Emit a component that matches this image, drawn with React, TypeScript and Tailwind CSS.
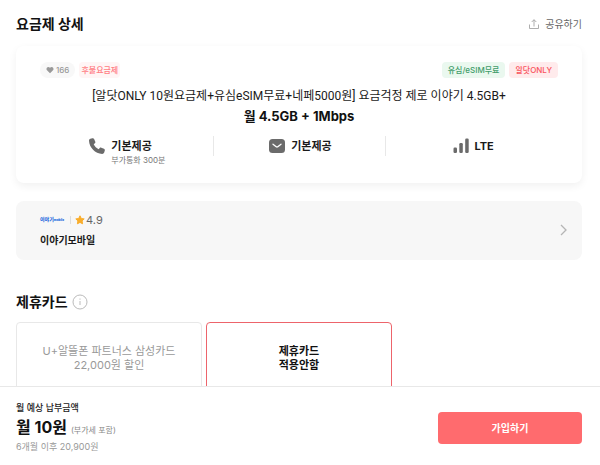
import type { ReactNode } from "react"

const benefits = [
  { icon: <PhoneIcon />, title: "기본제공", note: "부가통화 300분" },
  { icon: <MailIcon />, title: "기본제공" },
  { icon: <SignalIcon />, title: "LTE" },
]

const cards = [
  { id: "samsung", lines: ["U+알뜰폰 파트너스 삼성카드", "22,000원 할인"] },
  { id: "none", lines: ["제휴카드", "적용안함"] },
]

function PhoneIcon() {
  return (
    <svg className="size-4" viewBox="0 0 16 16" fill="#6b6b6b" aria-hidden="true">
      <path d="M3.300.3 1.400.8C.5 1.100 0 1.900 0 2.800.3 9.700 6.200 15.600 13.200 15.900c.9 0 1.700-.5 2-1.400l.6-2c.2-.7-.2-1.400-.8-1.700l-2.700-1.100c-.6-.2-1.200-.1-1.600.4l-1 1.200C7.500 10.300 5.700 8.500 4.700 6.300l1.200-1c.5-.4.6-1 .4-1.600L5.100 1.100C4.800.4 4-.1 3.300.3Z" />
    </svg>
  )
}

function MailIcon() {
  return (
    <svg className="size-4" viewBox="0 0 16 16" fill="none" aria-hidden="true">
      <rect y="1" width="16" height="14" rx="3.500" fill="#6b6b6b" />
      <path d="m4 6.200 3.200 2.500a1.300 1.300 0 0 0 1.600 0L12 6.200" stroke="white" strokeWidth="1.300" strokeLinecap="round" />
    </svg>
  )
}

function SignalIcon() {
  return (
    <svg className="size-4" viewBox="0 0 16 16" fill="#6b6b6b" aria-hidden="true">
      <rect x="0.500" y="9.500" width="3.500" height="5.500" rx="1.200" />
      <rect x="6.300" y="5" width="3.500" height="10" rx="1.200" />
      <rect x="12.200" y="0.500" width="3.500" height="14.500" rx="1.200" />
    </svg>
  )
}

function Tag({ className, children }: { className: string; children: ReactNode }) {
  return (
    <span className={`flex h-4 items-center rounded text-[8px] leading-4 font-medium ${className}`}>
      {children}
    </span>
  )
}

function PlanCard() {
  return (
    <section className="rounded-lg bg-white px-6 pt-4 pb-[15px] shadow-[0_3px_8px_rgba(0,0,0,0.06)]">
      <div className="flex items-center justify-between">
        <div className="flex gap-1">
          <span className="flex h-4 items-center gap-0.5 rounded-full bg-[#f8f8f8] px-1.5 text-[8px] leading-4 font-medium text-[#999999]">
            <svg className="size-2" viewBox="0 0 8 8" fill="#999999" aria-hidden="true">
              <path d="M4 7.200 1 4.300C-.6 2.600 1.800-.4 4 1.800 6.200-.4 8.600 2.600 7 4.300Z" />
            </svg>
            166
          </span>
          <Tag className="bg-[#fff5f5] px-0.5 text-[#ff7d84]">후불요금제</Tag>
        </div>
        <div className="flex gap-1">
          <Tag className="bg-[#eaf8ef] px-1.5 text-[#3f9c6a]">유심/eSIM무료</Tag>
          <Tag className="bg-[#ffebec] px-1.5 text-[#f9545d]">알닷ONLY</Tag>
        </div>
      </div>
      <h2 className="mt-2 text-center font-['Roboto','Noto_Sans_CJK_KR',sans-serif] text-[12px] leading-5 text-[#1a1a1a]">
        [알닷ONLY 10원요금제+유심eSIM무료+네페5000원] 요금걱정 제로 이야기 4.5GB+
      </h2>
      <p className="text-center text-[13px] leading-5 font-bold text-[#111111]">월 4.5GB + 1Mbps</p>
      <ul className="mt-2.5 grid grid-cols-3">
        {benefits.map((benefit, index) => (
          <li key={index} className="flex h-8">
            {index > 0 && <span className="h-5 w-px bg-[#e8e8e8]" />}
            <div className="flex flex-1 justify-center gap-1.5 pl-0.5">
              <span className="pt-0.5">{benefit.icon}</span>
              <div>
                <p className="text-[11px] leading-5 font-bold text-[#1a1a1a]">{benefit.title}</p>
                {benefit.note && <p className="text-[8px] leading-2 text-[#777777]">{benefit.note}</p>}
              </div>
            </div>
          </li>
        ))}
      </ul>
    </section>
  )
}

function CarrierLink() {
  return (
    <a href="#carrier" className="mt-[18px] flex items-center justify-between rounded-lg bg-[#f7f7f7] pt-2 pr-3 pb-2.5 pl-6">
      <div>
        <div className="flex items-center">
          <span className="text-[5px] leading-5 font-black whitespace-nowrap text-[#2f6fe0]">
            이야기<span className="text-[3px]">mobile</span>
          </span>
          <span className="ml-1.5 h-2 w-px bg-[#dddddd]" />
          <svg className="ml-1 size-2.5" viewBox="0 0 10 10" fill="#f9ad2b" stroke="#f9ad2b" strokeLinejoin="round" aria-hidden="true">
            <path d="m5 .8 1.300 2.700 2.900.4-2.100 2 .5 2.900L5 7.400 2.400 8.800l.5-2.900-2.100-2 2.900-.4Z" />
          </svg>
          <span className="ml-px text-[11px] leading-5 text-[#666666]">4.9</span>
        </div>
        <p className="text-[10px] leading-5 font-bold text-[#1a1a1a]">이야기모바일</p>
      </div>
      <svg className="size-3" viewBox="0 0 12 12" fill="none" stroke="#b5b5b5" strokeWidth="1.300" aria-hidden="true">
        <path d="m3 1 5 5-5 5" />
      </svg>
    </a>
  )
}

export default function App() {
  return (
    <div className="flex h-screen flex-col bg-white font-['Inter','Noto_Sans_CJK_KR',sans-serif] text-[#1a1a1a]">
      <main className="min-h-0 flex-1 overflow-y-auto pr-[18px] pl-4 [scrollbar-width:none]">
        <header className="flex items-center justify-between pt-3 pb-2.5">
          <h1 className="text-[14px] leading-6 font-bold text-[#111111]">요금제 상세</h1>
          <button type="button" className="flex items-center gap-1.5 text-[10px] leading-5 text-[#666666]">
            <svg className="size-2.5" viewBox="0 0 10 10" fill="none" stroke="#999999" strokeWidth="0.800" aria-hidden="true">
              <path d="M.5 5.500v4h9v-4M5 7.500V.8M2.700 3 5 .7 7.300 3" />
            </svg>
            공유하기
          </button>
        </header>
        <PlanCard />
        <CarrierLink />
        <section className="pt-7.5">
          <div className="flex items-center gap-1">
            <h2 className="text-[14px] leading-6 font-bold text-[#111111]">제휴카드</h2>
            <button type="button" aria-label="제휴카드 안내">
              <svg className="size-4" viewBox="0 0 16 16" fill="none" stroke="#bbbbbb" aria-hidden="true">
                <circle cx="8" cy="8" r="7" />
                <path d="M8 7v4M8 4.500v1.200" />
              </svg>
            </button>
          </div>
          <div className="mt-2 grid grid-cols-3 gap-1">
            {cards.map((card) => (
              <button
                key={card.id}
                type="button"
                aria-pressed={card.id === "none"}
                className={
                  card.id === "none"
                    ? "h-[72px] rounded border border-[#ed646b] text-[11px] leading-[14px] font-bold text-[#111111]"
                    : "h-[72px] rounded border border-[#e8e8e8] text-[11px] leading-[14px] text-[#999999]"
                }
              >
                {card.lines.map((line) => (
                  <span key={line} className="block">
                    {line}
                  </span>
                ))}
              </button>
            ))}
          </div>
        </section>
      </main>
      <footer className="flex items-center justify-between border-t border-[#e8e8e8] bg-white pt-3 pr-[18px] pb-2 pl-4">
        <div>
          <p className="text-[9px] leading-[18px] font-medium">월 예상 납부금액</p>
          <p className="flex items-baseline gap-1 leading-5">
            <strong className="text-[16px] text-[#111111]">월 10원</strong>
            <span className="text-[8px] leading-none text-[#888888]">(부가세 포함)</span>
          </p>
          <p className="text-[9px] leading-5 text-[#999999]">6개월 이후 20,900원</p>
        </div>
        <button type="button" className="h-8 w-36 rounded bg-[#ff6b6e] text-[10px] font-bold text-white">
          가입하기
        </button>
      </footer>
    </div>
  )
}
